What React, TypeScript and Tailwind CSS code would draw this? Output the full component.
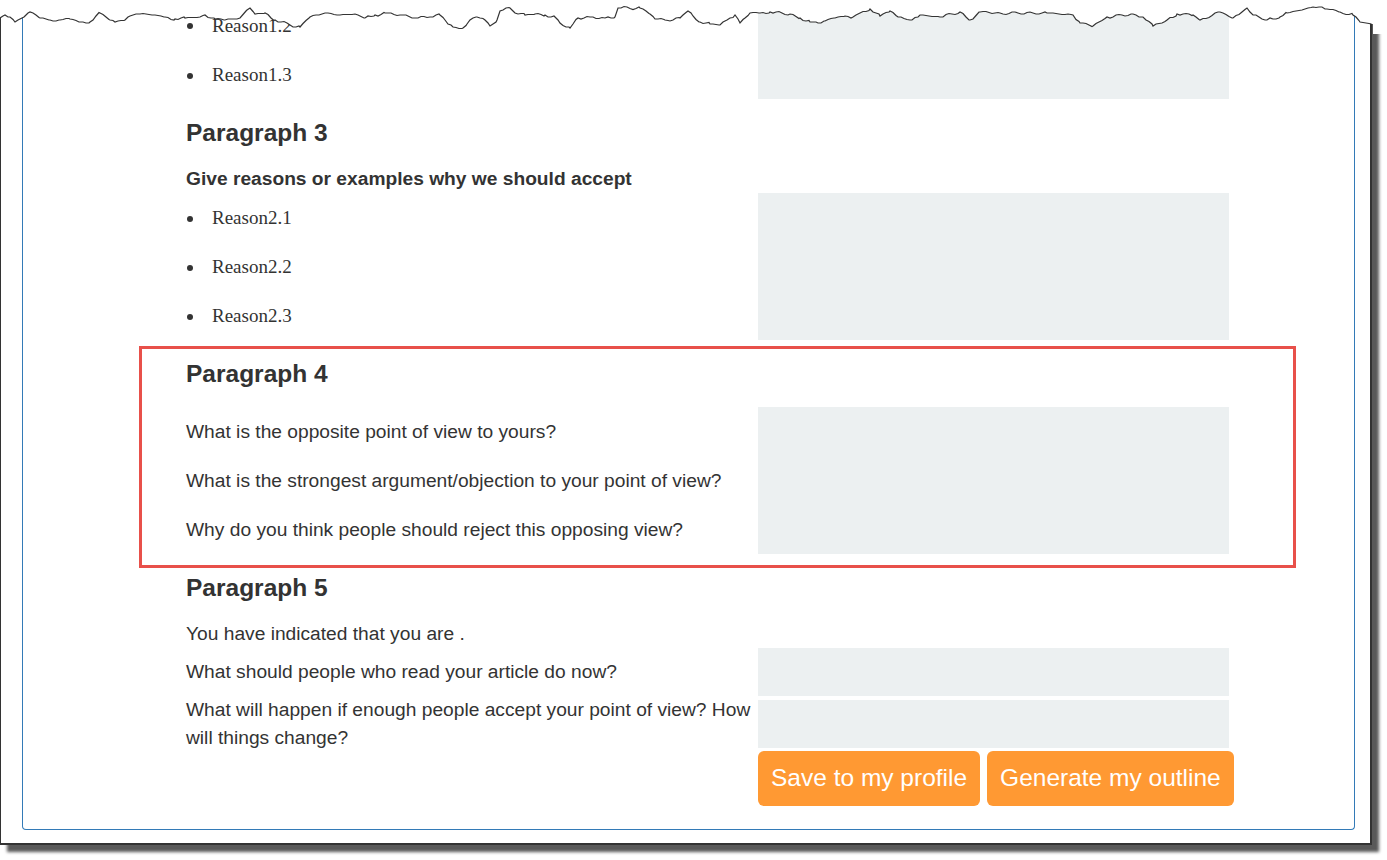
import React from "react";

const sans = "font-['Liberation_Sans',Arial,Helvetica,sans-serif]";
const serif = "font-['Liberation_Serif','Times_New_Roman',serif]";

// rough outline of the torn top edge
const edgeKeys: [number, number][] = [
  [0, 18], [5, 15], [10, 17], [15, 22], [25, 16], [30, 12], [40, 18], [50, 20], [60, 20], [70, 19],
  [80, 22], [90, 22], [100, 13], [110, 20], [115, 22], [125, 20], [130, 16], [140, 14], [155, 15],
  [165, 17], [175, 19], [185, 18], [200, 17], [205, 15], [215, 19], [225, 20], [240, 18], [247, 10],
  [250, 8], [255, 14], [265, 13], [275, 20], [290, 25], [300, 27], [310, 17], [325, 13], [340, 15],
  [355, 14], [365, 18], [375, 15], [385, 13], [400, 15], [415, 18], [430, 17], [440, 15], [445, 20],
  [453, 27], [463, 28], [467, 24], [470, 20], [477, 17], [485, 20], [490, 26], [497, 20], [500, 11],
  [510, 8], [515, 13], [525, 15], [535, 14], [545, 15], [555, 17], [560, 23], [570, 28], [578, 18],
  [590, 17], [605, 18], [615, 17], [618, 8], [640, 8], [650, 14], [655, 19], [665, 20], [670, 21],
  [680, 18], [688, 11], [693, 16], [700, 22], [710, 24], [720, 25], [727, 20], [735, 15], [740, 23],
  [745, 18], [750, 13], [760, 13], [770, 12], [790, 14], [800, 18], [810, 22], [818, 23], [825, 21],
  [835, 18], [845, 16], [853, 17], [860, 13], [870, 9], [880, 16], [890, 11], [898, 17], [912, 20],
  [920, 15], [940, 17], [960, 12], [970, 20], [980, 12], [1000, 13], [1033, 13], [1047, 13],
  [1073, 15], [1080, 23], [1093, 26], [1107, 17], [1133, 14], [1143, 17], [1153, 26], [1167, 20],
  [1177, 14], [1193, 15], [1200, 20], [1220, 12], [1233, 18], [1247, 8], [1253, 15], [1267, 20],
  [1280, 17], [1287, 13], [1313, 7], [1327, 9], [1340, 12], [1353, 15], [1360, 22], [1371, 24],
];

const edgePts: [number, number][] = [];
for (let i = 0; i < edgeKeys.length - 1; i++) {
  const [x1, y1] = edgeKeys[i];
  const [x2, y2] = edgeKeys[i + 1];
  for (let x = x1; x < x2; x += 3) {
    const t = (x - x1) / (x2 - x1);
    const n = x === x1 ? 0 : Math.sin(x * 1.7) * 0.8 + Math.sin(x * 0.37) * 0.6;
    edgePts.push([x, Math.round((y1 + (y2 - y1) * t + n) * 2) / 2]);
  }
}
edgePts.push(edgeKeys[edgeKeys.length - 1]);

const edgeLine = edgePts.map(([x, y]) => `${x},${y}`).join(" ");
const coverPoly =
  "0,-2 1387,-2 1387,34 1373,34 1373,24 " +
  [...edgePts].reverse().map(([x, y]) => `${x},${y}`).join(" ") +
  " 0,16";

const TornEdge = () => (
  <svg className="absolute top-0 left-0" width="1387" height="40" viewBox="0 0 1387 40">
    <polygon points={coverPoly} fill="#ffffff" />
    <polyline points={edgeLine + " 1371,40"} fill="none" stroke="#333" strokeWidth="1.2" />
  </svg>
);

const Reason = ({ label, h }: { label: string; h: string }) => (
  <li className={`flex items-center pt-[2px] ${h}`}>
    <span className="w-[6px] h-[6px] rounded-full bg-[#333] ml-[1px]" />
    <span className={`${serif} text-[19px] text-[#333] ml-[19px]`}>{label}</span>
  </li>
);

const Question = ({ text }: { text: string }) => (
  <div className="h-[49px] flex items-center text-[19.2px] leading-[28px]">{text}</div>
);

const Well = ({ h }: { h: string }) => <div className={`w-[471px] bg-[#ecf0f1] ${h}`} />;

const App = () => {
  return (
    <div className={`relative w-[1387px] h-[860px] bg-white overflow-hidden ${sans} text-[#333]`}>
      <div className="w-[1372px] h-[845px] bg-white border-l border-r-2 border-b-2 border-[#333] shadow-[7px_7px_3px_rgba(0,0,0,0.65)] overflow-hidden">
        <div className="ml-[21px] w-[1333px] h-[830px] border-x border-b border-[#337ab7] rounded-b-[4px]">
          {/* paragraph 2 reasons (scrolled off) */}
          <div className="ml-[163px] flex">
            <ul className="w-[572px]">
              <Reason label="Reason1.2" h="h-[50px]" />
              <Reason label="Reason1.3" h="h-[49px]" />
            </ul>
            <Well h="h-[99px]" />
          </div>

          <h3 className="ml-[163px] mt-[21px] text-[24.5px] leading-[26px] font-bold">Paragraph 3</h3>
          <h4 className="ml-[163px] mt-[23px] mb-[4px] text-[19.2px] leading-[20px] font-bold">
            Give reasons or examples why we should accept
          </h4>
          <div className="ml-[163px] flex">
            <ul className="w-[572px]">
              <Reason label="Reason2.1" h="h-[49px]" />
              <Reason label="Reason2.2" h="h-[49px]" />
              <Reason label="Reason2.3" h="h-[49px]" />
            </ul>
            <Well h="h-[147px]" />
          </div>

          {/* highlighted section */}
          <div className="ml-[116px] mt-[6px] w-[1157px] border-[3px] border-[#e8504a] pl-[44px] pt-[12px] pb-[11px]">
            <h3 className="text-[24.5px] leading-[26px] font-bold">Paragraph 4</h3>
            <div className="mt-[20px] flex">
              <div className="w-[572px]">
                <Question text="What is the opposite point of view to yours?" />
                <Question text="What is the strongest argument/objection to your point of view?" />
                <Question text="Why do you think people should reject this opposing view?" />
              </div>
              <Well h="h-[147px]" />
            </div>
          </div>

          <div className="ml-[163px]">
            <h3 className="mt-[7px] text-[24.5px] leading-[26px] font-bold">Paragraph 5</h3>
            <p className="mt-[19px] text-[19.2px] leading-[28px]">You have indicated that you are .</p>
            <div className="flex h-[48px] items-center">
              <div className="w-[572px] text-[19.2px] leading-[28px]">
                What should people who read your article do now?
              </div>
              <Well h="h-[48px]" />
            </div>
            <div className="flex h-[55px] items-center">
              <div className="w-[572px] text-[19.2px] leading-[28px]">
                What will happen if enough people accept your point of view? How will things change?
              </div>
              <Well h="h-[48px]" />
            </div>
            <div className="flex gap-[7px] ml-[572px]">
              <button className="h-[55px] px-[13px] rounded-[6px] bg-[#ff9933] text-white text-[24.5px]">
                Save to my profile
              </button>
              <button className="h-[55px] px-[13px] rounded-[6px] bg-[#ff9933] text-white text-[24.5px]">
                Generate my outline
              </button>
            </div>
          </div>
        </div>
      </div>
      <TornEdge />
    </div>
  );
};

export default App;
